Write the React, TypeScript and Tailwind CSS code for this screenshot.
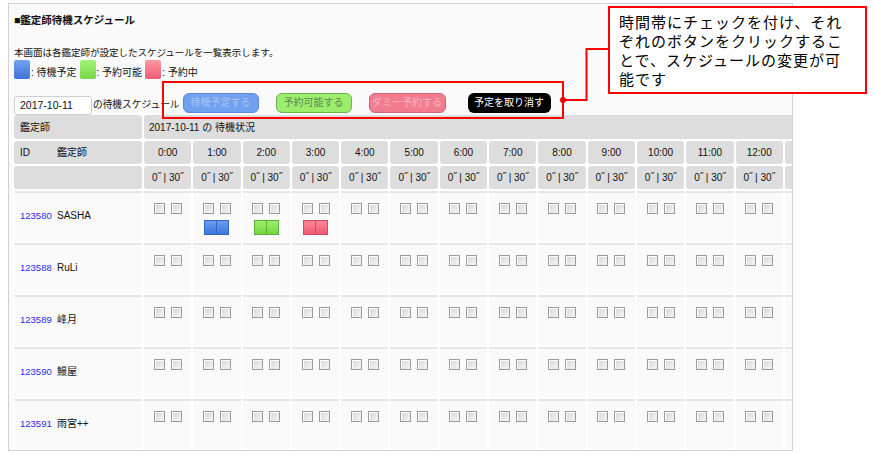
import React from 'react';

const hours = Array.from({ length: 13 }, (_, i) => `${i}:00`);

const appraisers = [
  { id: '123580', name: 'SASHA' },
  { id: '123588', name: 'RuLi' },
  { id: '123589', name: '峰月' },
  { id: '123590', name: '鰻屋' },
  { id: '123591', name: '雨宮++' },
  { id: '', name: '' },
];

// colour bars shown under the checkboxes (row 0 only)
const bars: Record<number, string> = {
  1: 'bg-linear-to-b from-[#6a9cf0] to-[#3f76dc] border-[#3566c4]',
  2: 'bg-linear-to-b from-[#9cf06a] to-[#72d63f] border-[#5cb03a]',
  3: 'bg-linear-to-b from-[#fb8797] to-[#ef5a72] border-[#d24a62]',
};

const Checkbox: React.FC = () => (
  <span className="block w-[11px] h-[11px] border border-[#9c9c9c] bg-linear-to-br from-[#d6d6d6] to-[#f6f6f6] shadow-[inset_1px_1px_0_#ffffff]" />
);

const App: React.FC = () => {
  return (
    <div className="relative w-[874px] h-[457px] bg-white overflow-hidden font-['Liberation_Sans','Noto_Sans_CJK_JP',sans-serif] text-[#111]">
      <div className="ml-[8px] mt-[3px] w-[785px] h-[448px] border border-[#d2d2d2] bg-[#fafafa] overflow-hidden pl-[3px]">
        <div className="pl-[2px]">
          <div className="pt-[9px] text-[10.5px] leading-[14px] font-bold">■鑑定師待機スケジュール</div>
          <div className="mt-[19px] text-[9.5px] leading-[14px]">本画面は各鑑定師が設定したスケジュールを一覧表示します。</div>
          <div className="flex items-end h-[19px] text-[10px] leading-[12px]">
            <span className="w-[16px] h-[19px] rounded-[2px] bg-linear-to-b from-[#76a4f2] to-[#3d72da]" />
            <span className="ml-[1px] mr-[3px]">: 待機予定</span>
            <span className="w-[16px] h-[19px] rounded-[2px] bg-linear-to-b from-[#a6f27a] to-[#74d844]" />
            <span className="ml-[1px] mr-[3px]">: 予約可能</span>
            <span className="w-[16px] h-[19px] rounded-[2px] bg-linear-to-b from-[#fb96a4] to-[#ee5b73]" />
            <span className="ml-[1px]">: 予約中</span>
          </div>
          <div className="mt-[14px] flex items-start h-[22px] text-[10px]">
            <div className="mt-[3px] w-[78px] h-[19px] bg-white border border-[#cfcfcf] rounded-[3px] pl-[5px] text-[10.5px] leading-[17px]">2017-10-11</div>
            <span className="mt-[5px] ml-[1px] text-[9.7px] leading-[14px]">の待機スケジュール</span>
            <button className="ml-[3px] w-[76px] h-[20px] rounded-[6px] border border-[#5b8ad8] bg-[#70a0f0] text-[#a9c3ee] leading-[18px]">待機予定する</button>
            <button className="ml-[17px] w-[76px] h-[20px] rounded-[6px] border border-[#6eb04e] bg-[#9ced6c] text-[#5d8a52] leading-[18px]">予約可能する</button>
            <button className="ml-[17px] w-[77px] h-[20px] rounded-[6px] border border-[#c9667a] bg-[#f07c8e] text-[#f6b6c0] leading-[18px]">ダミー予約する</button>
            <button className="ml-[22px] w-[83px] h-[20px] rounded-[6px] bg-black text-white leading-[18px]">予定を取り消す</button>
          </div>
        </div>

        <table className="-mt-[2px] table-fixed w-[820px] border-separate border-spacing-[2px] bg-white text-[10px]">
          <colgroup>
            <col className="w-[128px]" />
            {hours.map((h) => (
              <col key={h} className="w-[47.3px]" />
            ))}
            <col className="w-[47.3px]" />
          </colgroup>
          <thead>
            <tr className="h-[24px]">
              <th className="bg-[#dddddd] rounded-[3px] text-left font-normal pl-[6px]">鑑定師</th>
              <th colSpan={14} className="bg-[#dddddd] rounded-[3px] text-left font-normal pl-[5px]">
                2017-10-11 の 待機状況
              </th>
            </tr>
            <tr className="h-[23px]">
              <th className="bg-[#dddddd] rounded-[3px] text-left font-normal pl-[6px]">
                <span className="inline-block w-[37px]">ID</span>
                <span>鑑定師</span>
              </th>
              {hours.map((h) => (
                <th key={h} className="bg-[#dddddd] rounded-[3px] font-normal">
                  {h}
                </th>
              ))}
              <th className="bg-[#dddddd] rounded-[3px]" />
            </tr>
            <tr className="h-[23px]">
              <th className="bg-[#dddddd] rounded-[3px]" />
              {hours.map((h) => (
                <th key={h} className="bg-[#dddddd] rounded-[3px] font-normal whitespace-nowrap">
                  0˝ | 30˝
                </th>
              ))}
              <th className="bg-[#dddddd] rounded-[3px]" />
            </tr>
          </thead>
          <tbody>
            {appraisers.map((a, r) => (
              <tr key={r} className="h-[50px]">
                <td className="bg-[#fafafa] border-t-2 border-[#e6e6e6] align-middle pl-[6px] pb-[2px] whitespace-nowrap">
                  <span className="inline-block w-[37px] text-[9.5px] text-[#2c2cf0]">{a.id}</span>
                  <span>{a.name}</span>
                </td>
                {hours.map((h, c) => (
                  <td key={h} className="bg-[#fafafa] border-t-2 border-[#e6e6e6] align-top pt-[10px]">
                    <div className="flex justify-center gap-[6px]">
                      <Checkbox />
                      <Checkbox />
                    </div>
                    {r === 0 && bars[c] && (
                      <div className="mt-[6px] flex justify-center">
                        <span className={`w-[13px] h-[15px] border ${bars[c]}`} />
                        <span className={`w-[13px] h-[15px] border -ml-[1px] ${bars[c]}`} />
                      </div>
                    )}
                  </td>
                ))}
                <td className="bg-[#fafafa] border-t-2 border-[#e6e6e6]" />
              </tr>
            ))}
          </tbody>
        </table>
      </div>

      {/* annotation: frame around the buttons */}
      <div className="absolute left-[162px] top-[81px] w-[402px] h-[38px] border-2 border-[#ff0000]" />
      <svg className="absolute left-0 top-0 pointer-events-none" width="874" height="457">
        <path d="M563 100 H586.5 V49 H609" fill="none" stroke="#ff0000" strokeWidth="2" />
        <circle cx="563" cy="100" r="3" fill="#ff0000" />
      </svg>
      <div className="absolute left-[608px] top-[6px] w-[259px] h-[88px] border-2 border-[#ff0000] bg-white pl-[9px] pt-[4px] text-[15px] leading-[19px] tracking-[1px] font-['Noto_Sans_CJK_JP',sans-serif] text-black">
        時間帯にチェックを付け、それ
        <br />
        ぞれのボタンをクリックするこ
        <br />
        とで、スケジュールの変更が可
        <br />
        能です
      </div>
    </div>
  );
};

export default App;
